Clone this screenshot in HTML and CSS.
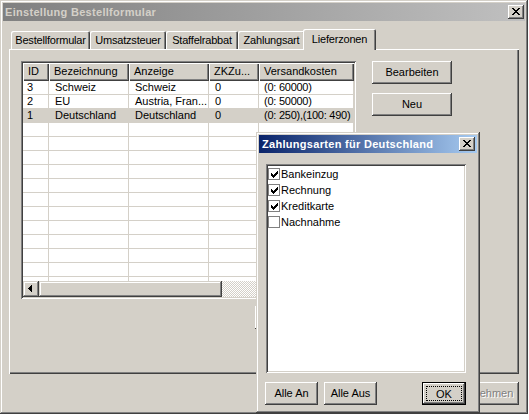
FILE: index.html
```html
<!DOCTYPE html>
<html lang="de">
<head>
<meta charset="utf-8">
<title>Einstellung Bestellformular</title>
<link rel="stylesheet" href="styles.css">
</head>
<body>
<div class="win main">
  <div class="titlebar inactive">
    <span class="title-text">Einstellung Bestellformular</span>
    <div class="closebtn"><svg width="8" height="7" viewBox="0 0 8 7" shape-rendering="crispEdges"><path d="M0 0h2v1H0zM6 0h2v1H6zM1 1h2v1H1zM5 1h2v1H5zM2 2h4v1H2zM3 3h2v1H3zM2 4h4v1H2zM1 5h2v1H1zM5 5h2v1H5zM0 6h2v1H0zM6 6h2v1H6z" fill="#000"/></svg></div>
  </div>
  <div class="client">
    <div class="tabs">
      <div class="tab w1">Bestellformular</div>
      <div class="tab w2">Umsatzsteuer</div>
      <div class="tab w3">Staffelrabbat</div>
      <div class="tab w4">Zahlungsart</div>
      <div class="tab sel">Lieferzonen</div>
    </div>
    <div class="panel">
      <div class="list-col">
        <div class="listview">
          <div class="lv-header">
            <div class="hc c1">ID</div>
            <div class="hc c2">Bezeichnung</div>
            <div class="hc c3">Anzeige</div>
            <div class="hc c4">ZKZu...</div>
            <div class="hc c5">Versandkosten</div>
          </div>
          <div class="lv-body">
            <div class="row"><div class="cell c1">3</div><div class="cell c2">Schweiz</div><div class="cell c3">Schweiz</div><div class="cell c4">0</div><div class="cell c5">(0: 60000)</div></div>
            <div class="row"><div class="cell c1">2</div><div class="cell c2">EU</div><div class="cell c3">Austria, Fran...</div><div class="cell c4">0</div><div class="cell c5">(0: 50000)</div></div>
            <div class="row selected"><div class="cell c1">1</div><div class="cell c2">Deutschland</div><div class="cell c3">Deutschland</div><div class="cell c4">0</div><div class="cell c5">(0: 250),(100: 490)</div></div>
            <div class="row"><div class="cell c1"></div><div class="cell c2"></div><div class="cell c3"></div><div class="cell c4"></div><div class="cell c5"></div></div>
            <div class="row"><div class="cell c1"></div><div class="cell c2"></div><div class="cell c3"></div><div class="cell c4"></div><div class="cell c5"></div></div>
            <div class="row"><div class="cell c1"></div><div class="cell c2"></div><div class="cell c3"></div><div class="cell c4"></div><div class="cell c5"></div></div>
            <div class="row"><div class="cell c1"></div><div class="cell c2"></div><div class="cell c3"></div><div class="cell c4"></div><div class="cell c5"></div></div>
            <div class="row"><div class="cell c1"></div><div class="cell c2"></div><div class="cell c3"></div><div class="cell c4"></div><div class="cell c5"></div></div>
            <div class="row"><div class="cell c1"></div><div class="cell c2"></div><div class="cell c3"></div><div class="cell c4"></div><div class="cell c5"></div></div>
            <div class="row"><div class="cell c1"></div><div class="cell c2"></div><div class="cell c3"></div><div class="cell c4"></div><div class="cell c5"></div></div>
            <div class="row"><div class="cell c1"></div><div class="cell c2"></div><div class="cell c3"></div><div class="cell c4"></div><div class="cell c5"></div></div>
            <div class="row"><div class="cell c1"></div><div class="cell c2"></div><div class="cell c3"></div><div class="cell c4"></div><div class="cell c5"></div></div>
            <div class="row"><div class="cell c1"></div><div class="cell c2"></div><div class="cell c3"></div><div class="cell c4"></div><div class="cell c5"></div></div>
            <div class="row"><div class="cell c1"></div><div class="cell c2"></div><div class="cell c3"></div><div class="cell c4"></div><div class="cell c5"></div></div>
            <div class="row"><div class="cell c1"></div><div class="cell c2"></div><div class="cell c3"></div><div class="cell c4"></div><div class="cell c5"></div></div>
          </div>
          <div class="hscroll">
            <div class="sbtn"><svg width="16" height="16" viewBox="0 0 16 16" shape-rendering="crispEdges"><path d="M5 7h1v1H5zM6 6h1v3H6zM7 5h1v5H7zM8 4h1v7H8z" fill="#000"/></svg></div>
            <div class="thumb"></div>
            <div class="track"></div>
            <div class="sbtn"><svg width="16" height="16" viewBox="0 0 16 16" shape-rendering="crispEdges"><path d="M10 7h1v1h-1zM9 6h1v3H9zM8 5h1v5H8zM7 4h1v7H7z" fill="#000"/></svg></div>
          </div>
        </div>
        <div class="btn hidden-btn">Löschen</div>
      </div>
      <div class="side-buttons">
        <div class="btn side">Bearbeiten</div>
        <div class="btn side">Neu</div>
      </div>
    </div>
    <div class="footer">
      <div class="btn foot">OK</div>
      <div class="btn foot">Abbrechen</div>
      <div class="btn foot disabled">Übernehmen</div>
    </div>
  </div>
</div>

<div class="win popup">
  <div class="titlebar active">
    <span class="title-text">Zahlungsarten für Deutschland</span>
    <div class="closebtn"><svg width="8" height="7" viewBox="0 0 8 7" shape-rendering="crispEdges"><path d="M0 0h2v1H0zM6 0h2v1H6zM1 1h2v1H1zM5 1h2v1H5zM2 2h4v1H2zM3 3h2v1H3zM2 4h4v1H2zM1 5h2v1H1zM5 5h2v1H5zM0 6h2v1H0zM6 6h2v1H6z" fill="#000"/></svg></div>
  </div>
  <div class="pclient">
    <div class="checklist">
      <div class="item"><span class="cb"><svg width="7" height="7" viewBox="0 0 7 7" shape-rendering="crispEdges"><path d="M0 2h1v3H0zM1 3h1v3H1zM2 4h1v3H2zM3 3h1v3H3zM4 2h1v3H4zM5 1h1v3H5zM6 0h1v3H6z" fill="#000"/></svg></span>Bankeinzug</div>
      <div class="item"><span class="cb"><svg width="7" height="7" viewBox="0 0 7 7" shape-rendering="crispEdges"><path d="M0 2h1v3H0zM1 3h1v3H1zM2 4h1v3H2zM3 3h1v3H3zM4 2h1v3H4zM5 1h1v3H5zM6 0h1v3H6z" fill="#000"/></svg></span>Rechnung</div>
      <div class="item"><span class="cb"><svg width="7" height="7" viewBox="0 0 7 7" shape-rendering="crispEdges"><path d="M0 2h1v3H0zM1 3h1v3H1zM2 4h1v3H2zM3 3h1v3H3zM4 2h1v3H4zM5 1h1v3H5zM6 0h1v3H6z" fill="#000"/></svg></span>Kreditkarte</div>
      <div class="item"><span class="cb"></span>Nachnahme</div>
    </div>
    <div class="pbuttons">
      <div class="btn pb1">Alle An</div>
      <div class="btn pb2">Alle Aus</div>
      <div class="btn okbtn"><span class="focus">OK</span></div>
    </div>
  </div>
</div>
</body>
</html>
```
FILE: styles.css
```css
body {
  margin: 0;
  background: #ffffff;
  font-family: "Liberation Sans", Arial, sans-serif;
  font-size: 11px;
  color: #000;
}

.win {
  background: #d4d0c8;
  box-shadow: inset -1px -1px #404040, inset 1px 1px #d4d0c8, inset -2px -2px #808080, inset 2px 2px #ffffff;
  padding: 3px;
  box-sizing: border-box;
  display: flex;
  flex-direction: column;
}

.main {
  width: 528px;
  height: 414px;
}

.titlebar {
  height: 18px;
  flex: none;
  display: flex;
  align-items: center;
  padding: 0 1px 0 2px;
}

.inactive {
  background: linear-gradient(to right, #808080, #c0c0c0);
  color: #d4d0c8;
}

.active {
  background: linear-gradient(to right, #0a246a, #a6caf0);
  color: #ffffff;
  padding-left: 3px;
  padding-right: 2px;
}

.title-text {
  flex: 1;
  font-weight: bold;
  letter-spacing: 0.3px;
  white-space: nowrap;
  line-height: 18px;
}

.closebtn {
  width: 16px;
  height: 14px;
  box-sizing: border-box;
  background: #d4d0c8;
  box-shadow: inset -1px -1px #404040, inset 1px 1px #ffffff, inset -2px -2px #808080;
  display: flex;
  align-items: center;
  justify-content: center;
  padding: 0 1px 1px 0;
}

.closebtn svg { display: block; }

.client {
  flex: 1;
  padding: 8px 6px 0 6px;
  display: flex;
  flex-direction: column;
}

/* Tabs */
.tabs {
  height: 20px;
  display: flex;
  align-items: flex-end;
  padding-left: 2px;
}

.tab {
  height: 18px;
  line-height: 18px;
  box-sizing: border-box;
  text-align: center;
  white-space: nowrap;
  border-radius: 2px 2px 0 0;
  box-shadow: inset 1px 1px #ffffff, inset -1px 0 #404040, inset -2px 0 #808080;
  letter-spacing: -0.2px;
}

.w1 { width: 79px; }
.w2 { width: 76px; }
.w3 { width: 72px; }
.w4 { width: 67px; }

.tab.sel {
  width: 73px;
  height: 21px;
  line-height: 20px;
  margin-left: -2px;
  margin-bottom: -1px;
  position: relative;
  z-index: 1;
  background: #d4d0c8;
  box-shadow: inset 1px 1px #ffffff, inset -1px 0 #404040, inset -2px 0 #808080;
}

/* Panel */
.panel {
  height: 325px;
  box-sizing: border-box;
  box-shadow: inset 1px 1px #ffffff, inset -1px -1px #404040, inset -2px -2px #808080;
  padding: 12px 0 0 12px;
  display: flex;
  align-items: flex-start;
}

.list-col {
  display: flex;
  flex-direction: column;
}

.listview {
  width: 335px;
  height: 238px;
  box-sizing: border-box;
  background: #ffffff;
  box-shadow: inset 1px 1px #808080, inset -1px -1px #ffffff, inset 2px 2px #404040, inset -2px -2px #d4d0c8;
  padding: 2px;
  display: flex;
  flex-direction: column;
  overflow: hidden;
}

.lv-header {
  height: 18px;
  flex: none;
  display: flex;
  background: #d4d0c8;
}

.hc {
  height: 18px;
  line-height: 17px;
  box-sizing: border-box;
  padding-left: 5px;
  white-space: nowrap;
  overflow: hidden;
  background: #d4d0c8;
  box-shadow: inset 1px 1px #ffffff, inset -1px -1px #404040, inset -2px -2px #808080;
}

.c1 { width: 26px; flex: none; }
.c2 { width: 80px; flex: none; }
.c3 { width: 80px; flex: none; }
.c4 { width: 50px; flex: none; }
.c5 { width: 95px; flex: none; }

.lv-body {
  height: 200px;
  flex: none;
  overflow: hidden;
}

.row {
  display: flex;
  height: 14px;
  box-sizing: border-box;
  border-bottom: 1px solid #d4d0c8;
}

.row.selected { background: #d4d0c8; }

.cell {
  height: 13px;
  line-height: 13px;
  box-sizing: border-box;
  padding-left: 6px;
  white-space: nowrap;
  overflow: hidden;
  border-right: 1px solid #d4d0c8;
}

.cell.c1 { padding-left: 4px; }
.cell.c5 { padding-left: 5px; letter-spacing: -0.25px; }

.hscroll {
  height: 16px;
  flex: none;
  display: flex;
}

.sbtn {
  width: 16px;
  height: 16px;
  flex: none;
  background: #d4d0c8;
  box-shadow: inset -1px -1px #404040, inset 1px 1px #d4d0c8, inset -2px -2px #808080, inset 2px 2px #ffffff;
}

.sbtn svg { display: block; }

.thumb {
  width: 183px;
  height: 16px;
  flex: none;
  background: #d4d0c8;
  box-shadow: inset -1px -1px #404040, inset 1px 1px #d4d0c8, inset -2px -2px #808080, inset 2px 2px #ffffff;
}

.track {
  flex: 1;
  background: repeating-conic-gradient(#ffffff 0 25%, #d4d0c8 0 50%) 0 0 / 2px 2px;
}

/* Buttons */
.btn {
  height: 23px;
  box-sizing: border-box;
  background: #d4d0c8;
  box-shadow: inset -1px -1px #404040, inset 1px 1px #ffffff, inset -2px -2px #808080;
  display: flex;
  align-items: center;
  justify-content: center;
  white-space: nowrap;
  padding-bottom: 1px;
}

.hidden-btn {
  width: 80px;
  margin: 7px 0 0 234px;
}

.side-buttons {
  margin-left: 16px;
  display: flex;
  flex-direction: column;
  gap: 9px;
}

.side { width: 80px; }

.footer {
  display: flex;
  justify-content: flex-end;
  gap: 6px;
  margin-top: 8px;
}

.foot { width: 75px; }

.disabled {
  color: #808080;
  text-shadow: 1px 1px #ffffff;
}

/* Popup dialog */
.popup {
  position: absolute;
  left: 256px;
  top: 132px;
  width: 224px;
  height: 281px;
}

.pclient {
  padding: 11px 0 0 7px;
}

.checklist {
  width: 200px;
  height: 209px;
  box-sizing: border-box;
  background: #ffffff;
  box-shadow: inset 1px 1px #808080, inset -1px -1px #ffffff, inset 2px 2px #404040, inset -2px -2px #d4d0c8;
  padding: 2px 2px 0 2px;
}

.item {
  height: 16px;
  line-height: 16px;
  display: flex;
  align-items: center;
  white-space: nowrap;
}

.cb {
  width: 12px;
  height: 12px;
  box-sizing: border-box;
  border: 1px solid #808080;
  background: #ffffff;
  margin-right: 1px;
  display: flex;
  align-items: center;
  justify-content: center;
  flex: none;
}

.cb svg { display: block; }

.pbuttons {
  display: flex;
  gap: 6px;
  width: 201px;
  margin: 9px 0 0 -1px;
}

.pb1 { width: 53px; }
.pb2 { width: 53px; }

.okbtn {
  width: 44px;
  margin-left: auto;
  box-shadow: inset 0 0 0 1px #000000, inset -2px -2px #404040, inset 2px 2px #ffffff, inset -3px -3px #808080;
  padding: 4px;
}

.focus {
  flex: 1;
  align-self: stretch;
  display: flex;
  align-items: center;
  justify-content: center;
  outline: 1px dotted #000000;
  outline-offset: -1px;
}
```
